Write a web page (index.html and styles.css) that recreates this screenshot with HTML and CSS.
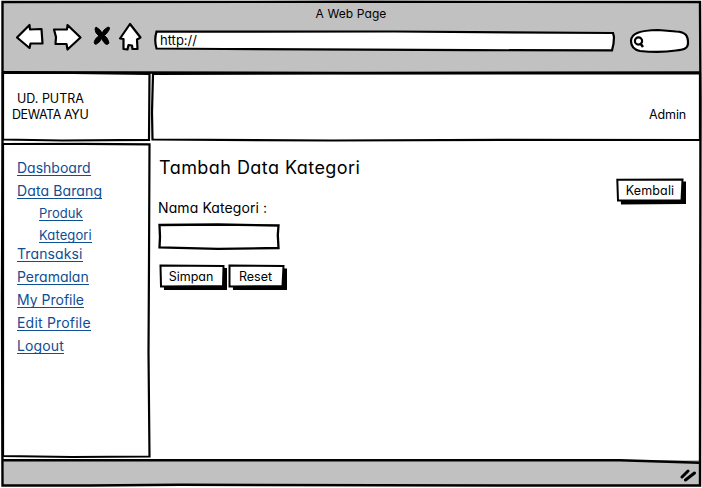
FILE: index.html
```html
<!DOCTYPE html>
<html lang="id">
<head>
<meta charset="utf-8">
<title>A Web Page</title>
<link rel="stylesheet" href="styles.css">
</head>
<body>
<div class="window">
  <header class="toolbar">
    <div class="page-title">A Web Page</div>
    <div class="controls">
      <svg class="nav-icons" width="130" height="34" viewBox="14 20 130 34">
        <g fill="#fff" stroke="#000" stroke-width="2.200" stroke-linejoin="round">
          <path d="M17 37.500L29.500 25L30 29.500L41.500 29L42.500 43.500L30.500 43.500L29.500 48Z"/>
          <path d="M54 29.500L67 29.500L67.500 25L80.500 37.500L67.500 49.500L66.500 44L55.500 44L56 37Z"/>
          <path d="M130 24L140.500 37.500L137 39.500L137.500 49H132.500L132 45.500L128.500 45L127.500 49.500L123.500 49V39L120 38.500Z"/>
        </g>
        <path d="M96 27Q101 30 102 33Q104 29 108 27Q110.500 27 109 30Q107 33.500 104.500 35.500Q108 38 109 43Q107 46 104 42.500L101.500 38.500Q100 42.500 96 44.300Q93 44 95 40Q96 37.500 99 36Q95 33 95 29Z" stroke="#000" stroke-width="1"/>
      </svg>
      <div class="address">
        <svg class="sketch" viewBox="0 0 462 22" preserveAspectRatio="none"><path d="M2.500 1.600L240 1.500L459 3L460 7Q460 14 458 20.300L320 20.200L70 19L2.500 18.500Q0 10 2.500 1.600Z" fill="#fff" stroke="#000" stroke-width="2.200"/></svg>
        <span>http://</span>
      </div>
      <svg class="search" width="62" height="26" viewBox="629 28 62 26">
        <path d="M631 41C631 33 640 30.500 658 30L676 31.500C686 32 688 36 688 43C688 49 683 50 676 50.500Q660 53 640 51Q631 49 631 41Z" fill="#fff" stroke="#000" stroke-width="2.200"/>
        <circle cx="638.500" cy="41" r="3.600" fill="#fff" stroke="#000" stroke-width="2.200"/>
        <path d="M640 43L643 47" stroke="#000" stroke-width="2.500"/>
      </svg>
    </div>
  </header>
  <div class="banner">
    <div class="brand">
      <svg class="sketch" viewBox="0 0 150 70" preserveAspectRatio="none"><path d="M1 1L70 1L147.500 2L147 67.800L60 68.500L1 67.500Z" fill="#fff" stroke="#000" stroke-width="2.200"/></svg>
      <div class="brand-name"><span class="brand-top">UD. PUTRA</span><br><span class="brand-bottom">DEWATA AYU</span></div>
    </div>
    <div class="account">
      <svg class="sketch" viewBox="0 0 549 70" preserveAspectRatio="none"><path d="M1 2L180 1.500L548 1.500V68L350 67.800L180 68.500L.5 67.500L0 40Z" fill="#fff" stroke="#000" stroke-width="2.200"/></svg>
      <span class="user">Admin</span>
    </div>
  </div>
  <div class="body">
    <nav class="sidebar">
      <svg class="sketch" viewBox="0 0 149 316" preserveAspectRatio="none"><path d="M1 1L80 .8L147.500 1.300L147 120L146.500 210L147.500 314.500L70 315L1 314Z" fill="#fff" stroke="#000" stroke-width="2.200"/></svg>
      <ul class="menu">
        <li><a>Dashboard</a></li>
        <li><a class="loose">Data Barang</a>
          <ul class="submenu">
            <li><a>Produk</a></li>
            <li><a class="loose">Kategori</a></li>
          </ul>
        </li>
        <li><a class="loose">Transaksi</a></li>
        <li><a>Peramalan</a></li>
        <li><a>My Profile</a></li>
        <li><a class="looser">Edit Profile</a></li>
        <li><a class="loose">Logout</a></li>
      </ul>
    </nav>
    <main class="content">
      <div class="form">
        <h1>Tambah Data Kategori</h1>
        <label for="nama">Nama Kategori :</label>
        <div class="field">
          <svg class="sketch" viewBox="0 0 122 27" preserveAspectRatio="none"><path d="M1.500 2L60 1.500L120.500 2.500L119.800 12L120.500 25L60 25.800L1.500 24.500L2 14Z" fill="#fff" stroke="#000" stroke-width="2.300"/></svg>
          <input id="nama" type="text">
        </div>
        <div class="actions">
          <button class="simpan" type="button">
            <svg class="sketch" viewBox="0 0 69 27" preserveAspectRatio="none"><path d="M4 3L68 4V26H5Z"/><path d="M1.500 1.500L64.500 2L64 22L2 22.500Z" fill="#fff" stroke="#000" stroke-width="2"/></svg>
            <span>Simpan</span>
          </button>
          <button class="reset" type="button">
            <svg class="sketch" viewBox="0 0 60 27" preserveAspectRatio="none"><path d="M4 4L59 4.500V26H5Z"/><path d="M1.500 1.500L55.500 2L54.500 22L1.500 22.500Z" fill="#fff" stroke="#000" stroke-width="2"/></svg>
            <span>Reset</span>
          </button>
        </div>
      </div>
      <button class="kembali" type="button">
        <svg class="sketch" viewBox="0 0 71 27" preserveAspectRatio="none"><path d="M4 4L70 3.500V26L5 26.500Z"/><path d="M1.300 1.800L66.500 1.500L65.500 22.500L2 22.500Z" fill="#fff" stroke="#000" stroke-width="2"/></svg>
        <span>Kembali</span>
      </button>
    </main>
  </div>
  <footer class="status">
    <svg width="18" height="14" viewBox="680 468 18 14" stroke="#000" stroke-width="3" stroke-linecap="round"><path d="M682 477L688 471M685.500 480L694.500 473"/></svg>
  </footer>
  <svg class="outline" viewBox="0 0 702 488" fill="none" stroke="#000" stroke-width="2.400">
    <path d="M2.500 2L350 1.800L700 2L700.500 100L700 485.500L500 485.500L180 484.800L90 485.500L2.500 485.500L2 300L2.500 140Z"/>
    <path d="M2 72.300L350 73L700 72.500M2 460.300L620 460.300L700 462.800"/>
  </svg>
</div>
</body>
</html>
```
FILE: styles.css
```css
* { box-sizing: border-box; }
body {
  margin: 0;
  background: #fff;
  color: #000;
  font-family: Inter, "Liberation Sans", sans-serif;
  font-feature-settings: "cv11" 1;
  font-size: 13px;
  overflow: hidden;
}
.window {
  position: relative;
  width: 702px;
  height: 488px;
  padding: 1px 1px 2px 2px;
  display: flex;
  flex-direction: column;
}
.outline { position: absolute; inset: 0; pointer-events: none; }
.sketch { position: absolute; inset: 0; width: 100%; height: 100%; overflow: visible; }

.toolbar { height: 71px; background: #c1c1c1; }
.page-title {
  height: 25px;
  padding-right: 1px;
  line-height: 26px;
  text-align: center;
  font-size: 12px;
  letter-spacing: 0.1px;
}
.controls { display: flex; align-items: flex-start; padding-left: 12px; }
.nav-icons { margin-top: -6px; }
.address { position: relative; width: 462px; height: 22px; margin: 4px 0 0 10px; padding-left: 6px; line-height: 21px; }
.address span { position: relative; }
.search { margin: 2px 0 0 13px; }

.banner { display: flex; height: 70px; }
.brand { position: relative; width: 150px; }
.brand-name { position: relative; padding: 19px 0 0 10px; line-height: 16px; font-size: 12.5px; }
.brand-top { padding-left: 5px; }
.brand-bottom { letter-spacing: -0.4px; }
.account { position: relative; width: 549px; padding-right: 15px; display: flex; justify-content: flex-end; }
.user { position: relative; margin-top: 34px; line-height: 17px; font-size: 12.5px; letter-spacing: -0.15px; }

.body { flex: 1; display: flex; padding-top: 1px; }
.sidebar { position: relative; width: 149px; height: 315px; }
.menu { position: relative; margin: 0; padding: 17px 0 0 15px; list-style: none; font-size: 14px; }
.menu li { margin-bottom: 7px; }
.menu a {
  display: block;
  width: fit-content;
  height: 16px;
  line-height: 15px;
  border-bottom: 1px solid #0e4e93;
  color: #0e4e93;
  white-space: nowrap;
}
.menu .loose { letter-spacing: 0.12px; }
.menu .looser { letter-spacing: 0.2px; }
.submenu { list-style: none; margin: 0 0 -4px; padding: 6px 0 0 22px; font-size: 13px; }
.menu .submenu li { margin-bottom: 6px; }
.menu .submenu li:last-child { margin-bottom: 0; }
.submenu a { line-height: 16px; }

.content { flex: 1; display: flex; justify-content: space-between; padding: 14px 14px 0 7px; }
.form { display: flex; flex-direction: column; align-items: flex-start; }
h1 { margin: 0 0 0 1px; line-height: 22px; font-size: 18px; font-weight: 400; letter-spacing: 0.45px; }
label { margin-top: 20px; line-height: 18px; font-size: 14px; letter-spacing: 0.1px; }
.field { position: relative; width: 122px; height: 27px; margin-top: 6px; }
.field input { position: relative; width: 100%; height: 100%; padding: 0 6px; border: 0; background: transparent; font: inherit; outline: 0; }
.actions { display: flex; margin: 14px 0 0 1px; }
button {
  position: relative;
  height: 27px;
  margin: 0;
  padding: 0 5px 3px 0;
  border: 0;
  background: none;
  color: #000;
  font: inherit;
  font-size: 12.5px;
  font-feature-settings: inherit;
}
button span { position: relative; }
.simpan { width: 69px; }
.reset { width: 60px; }
.kembali { width: 71px; padding-right: 3px; margin-top: 21px; letter-spacing: 0.15px; }

.status { height: 26px; display: flex; justify-content: flex-end; padding: 8px 3px 0 0; background: #c1c1c1; }
```
